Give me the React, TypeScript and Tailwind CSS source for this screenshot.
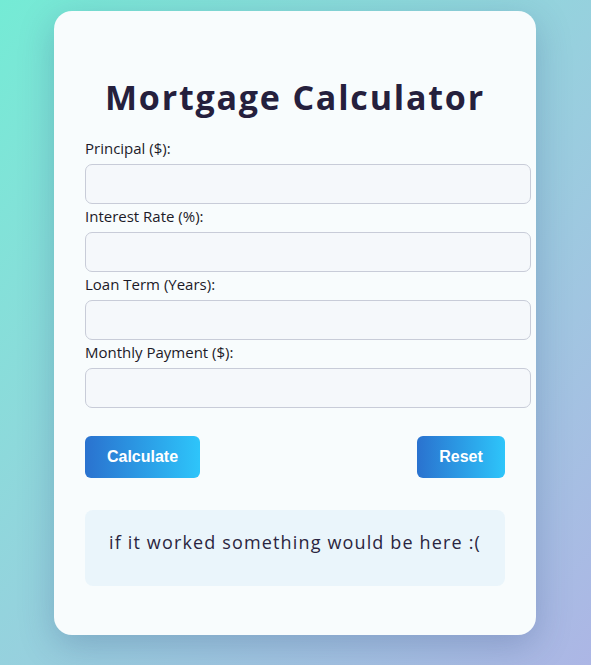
import React from "react";

const fields = [
  "Principal ($):",
  "Interest Rate (%):",
  "Loan Term (Years):",
  "Monthly Payment ($):",
];

export default function App() {
  return (
    <div
      className="min-h-screen w-full bg-gradient-to-br from-[#74ebd5] to-[#acb6e5] pt-[11px] pb-[30px]"
      style={{ fontFamily: '"Segoe UI", "Open Sans", "Noto Sans", sans-serif' }}
    >
      <div className="ml-[54px] w-[482px] h-[624px] rounded-[18px] bg-[#f8fcfd] px-[31px] pt-[32px] shadow-[0_10px_35px_rgba(40,60,120,0.25)]">
        <h1 className="mt-[32px] mb-[17px] h-[44px] whitespace-nowrap text-center text-[34px] leading-[44px] font-bold tracking-[1.8px] text-[#25203d]">
          Mortgage Calculator
        </h1>
        {fields.map((f) => (
          <div key={f}>
            <label className="block h-[24px] mb-[4px] text-[15px] leading-[24px] text-[#1c1a28]">
              {f}
            </label>
            <input
              type="text"
              className="block box-content w-[420px] h-[38px] px-[12px] rounded-[7px] border border-[#c8ccd8] bg-[#f5f8fb] outline-none"
            />
          </div>
        ))}
        <div className="mt-[28px] flex justify-between">
          <button
            className="h-[42px] w-[115px] rounded-[6px] bg-gradient-to-r from-[#2a72cf] to-[#2ec5fa] text-[16px] font-bold text-white"
            style={{ fontFamily: '"Liberation Sans", Arial, sans-serif' }}
          >
            Calculate
          </button>
          <button
            className="h-[42px] w-[88px] rounded-[6px] bg-gradient-to-r from-[#2a72cf] to-[#2ec5fa] text-[16px] font-bold text-white"
            style={{ fontFamily: '"Liberation Sans", Arial, sans-serif' }}
          >
            Reset
          </button>
        </div>
        <div className="mt-[32px] h-[76px] rounded-[8px] bg-[#eaf5fb] px-[16px] pt-[20px]">
          <p className="whitespace-nowrap text-center text-[18px] leading-[24px] tracking-[1.15px] text-[#2a2540]">
            if it worked something would be here :(
          </p>
        </div>
      </div>
    </div>
  );
}
